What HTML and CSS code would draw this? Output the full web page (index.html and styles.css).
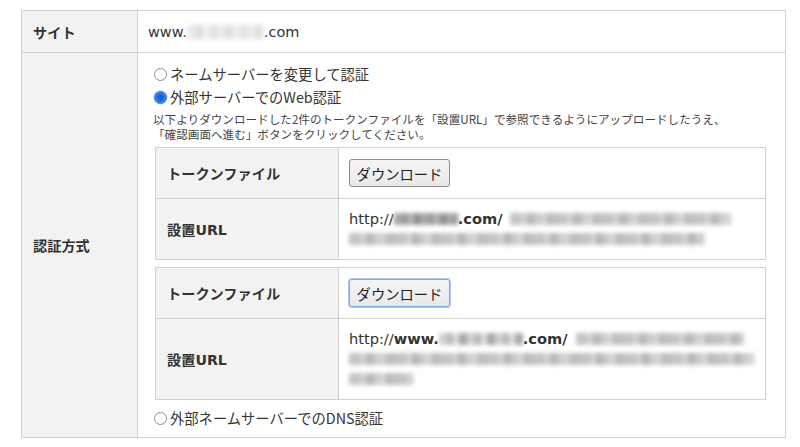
FILE: index.html
```html
<!DOCTYPE html>
<html lang="ja">
<head>
<meta charset="utf-8">
<title>認証方式</title>
<link rel="stylesheet" href="styles.css">
</head>
<body>
<table class="form">
  <tr class="row-site">
    <th class="lbl">サイト</th>
    <td class="val site">www.<span class="blur blur-site"></span>.com</td>
  </tr>
  <tr>
    <th class="lbl">認証方式</th>
    <td class="val method">
      <label class="opt"><input type="radio" name="m">ネームサーバーを変更して認証</label>
      <label class="opt"><input type="radio" name="m" checked>外部サーバーでのWeb認証</label>
      <p class="note"><span class="nl">以下よりダウンロードした2件のトークンファイルを「設置URL」で参照できるようにアップロードしたうえ、</span><span class="nl">「確認画面へ進む」ボタンをクリックしてください。</span></p>
      <table class="token">
        <tr class="r-btn">
          <th class="tl">トークンファイル</th>
          <td class="tv"><button class="dl" type="button">ダウンロード</button></td>
        </tr>
        <tr>
          <th class="tl">設置URL</th>
          <td class="tv url">
            <div class="uline">http://<span class="blur dk w64"></span><b>.com/</b><span class="blur lt w221 gapl"></span></div>
            <div class="uline"><span class="blur lt w356"></span></div>
          </td>
        </tr>
      </table>
      <table class="token second">
        <tr class="r-btn">
          <th class="tl">トークンファイル</th>
          <td class="tv"><button class="dl focus" type="button">ダウンロード</button></td>
        </tr>
        <tr>
          <th class="tl">設置URL</th>
          <td class="tv url">
            <div class="uline">http://<b>www.</b><span class="blur dk2 w84"></span><b>.com/</b><span class="blur lt w168 gapl"></span></div>
            <div class="uline"><span class="blur lt w405"></span></div>
            <div class="uline"><span class="blur lt w64"></span></div>
          </td>
        </tr>
      </table>
      <label class="opt dns"><input type="radio" name="m">外部ネームサーバーでのDNS認証</label>
    </td>
  </tr>
</table>
</body>
</html>
```

FILE: styles.css
```css
html, body {
  background: #ffffff;
}
body {
  margin: 10px 0 0 21px;
  font-family: "DejaVu Sans", "Noto Sans CJK JP", sans-serif;
  color: #333333;
  font-size: 14px;
}
table {
  border-collapse: collapse;
}
.form {
  width: 765px;
}
.form > tbody > tr > th,
.form > tbody > tr > td {
  border: 1px solid #d2d2d2;
}
.lbl {
  width: 116px;
  background: #f2f2f2;
  text-align: left;
  vertical-align: middle;
  padding: 0 0 0 11px;
  font-weight: bold;
  font-size: 14.2px;
  box-sizing: border-box;
}
.val {
  padding: 0 10px;
}
.row-site > td, .row-site > th {
  height: 42px;
  box-sizing: border-box;
}
.site {
  font-size: 14.5px;
  vertical-align: middle;
}
.method {
  padding: 9px 10px 8px 11px;
  vertical-align: top;
}
.opt {
  display: flex;
  align-items: center;
  height: 23px;
  font-family: "Noto Sans CJK JP", sans-serif;
  font-size: 14.3px;
  color: #333;
}
.opt input {
  appearance: none;
  -webkit-appearance: none;
  width: 13px;
  height: 13px;
  margin: 2px 3px 0 5px;
  border: 1px solid #8a8a8a;
  border-radius: 50%;
  background: #fff;
  box-sizing: border-box;
  flex: none;
}
.opt input:checked {
  border: 1px solid #3f87e6;
  background: radial-gradient(circle, #1a62d8 0 3px, #2f7ae8 3.5px 100%);
  box-shadow: 0 0 0 0.5px #9ec3f3;
}
.note {
  margin: 4px 0 0 4px;
  font-family: "Noto Sans CJK JP", sans-serif;
  font-size: 11.6px;
  color: #444;
}
.nl {
  display: block;
  height: 15px;
  line-height: 15px;
  white-space: nowrap;
}
.token {
  width: 611px;
  margin: 5px 0 0 6px;
}
.token.second {
  margin-top: 7px;
}
.token th, .token td {
  border: 1px solid #d2d2d2;
}
.tl {
  width: 183px;
  box-sizing: border-box;
  background: #f2f2f2;
  text-align: left;
  vertical-align: middle;
  padding: 0 0 0 11px;
  font-weight: bold;
  font-size: 14.2px;
}
.tv {
  padding: 10px 10px 10px 10px;
  vertical-align: top;
}
.r-btn .tv {
  padding: 11px 10px 11px 10px;
}
.dl {
  display: block;
  height: 28px;
  width: 101px;
  padding: 0;
  font-family: "Noto Sans CJK JP", sans-serif;
  font-size: 14.3px;
  color: #222;
  background: linear-gradient(#f6f6f6, #e8e8e8);
  border: 1px solid #8c8c8c;
  border-radius: 3px;
}
.dl.focus {
  border: 1px solid #7aa9e6;
  box-shadow: 0 0 0 1px #a9c9f2;
}
.url {
  font-size: 14.6px;
  line-height: 20px;
}
.url b {
  font-weight: bold;
}
.uline {
  height: 20px;
  white-space: nowrap;
  display: flex;
  align-items: center;
}
.blur {
  display: inline-block;
  height: 12px;
  filter: blur(2px);
  flex: none;
}
.blur-site {
  width: 77px;
  height: 14px;
  vertical-align: -2px;
  background: repeating-linear-gradient(90deg, #ebebeb 0 9px, #dcdcdc 9px 15px, #eeeeee 15px 24px, #e0e0e0 24px 30px);
}
.dk {
  background: repeating-linear-gradient(90deg, #a8a8a8 0 8px, #9a9a9a 8px 14px, #b5b5b5 14px 20px, #8f8f8f 20px 26px);
}
.dk2 {
  background: repeating-linear-gradient(90deg, #d0d0d0 0 8px, #b8b8b8 8px 14px, #dedede 14px 20px, #a8a8a8 20px 28px);
}
.lt {
  background: repeating-linear-gradient(90deg, #c4c4c4 0 11px, #d2d2d2 11px 17px, #b8b8b8 17px 25px, #cdcdcd 25px 32px, #dadada 32px 36px, #bebebe 36px 46px);
}
.gapl { margin-left: 8px; }
.w64 { width: 64px; }
.w84 { width: 84px; }
.w221 { width: 221px; }
.w168 { width: 168px; }
.w356 { width: 356px; }
.w405 { width: 405px; }
.dns {
  margin-top: 6px;
}
```
